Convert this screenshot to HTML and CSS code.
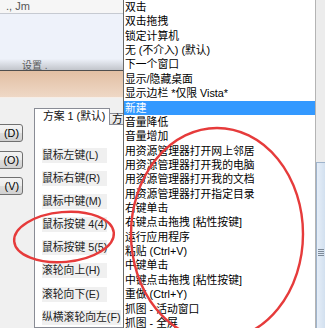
FILE: index.html
```html
<!DOCTYPE html>
<html lang="zh-CN">
<head>
    <meta charset="UTF-8">
    <title>鼠标按键设置</title>
    <link rel="stylesheet" href="styles.css">
</head>
<body>

    <div class="screen">
        <div class="left-pane">
            <div class="title-strip"><span>., Jm</span></div>
            <div class="preview">
                <span class="preview-caption">设置 .</span>
            </div>
            <div class="peach-bar"></div>

            <div class="lower">
                <div class="button-col">
                    <button class="btn">(D)</button>
                    <button class="btn">(O)</button>
                    <button class="btn">(V)</button>
                </div>

                <div class="tab-control">
                    <div class="tab-strip">
                        <div class="tab active">方案 1 (默认)</div>
                        <div class="tab">方</div>
                    </div>
                    <div class="tab-panel">
                        <span class="key-label">鼠标左键(L)</span>
                        <span class="key-label">鼠标右键(R)</span>
                        <span class="key-label">鼠标中键(M)</span>
                        <span class="key-label">鼠标按键 4(4)</span>
                        <span class="key-label">鼠标按键 5(5)</span>
                        <span class="key-label">滚轮向上(H)</span>
                        <span class="key-label">滚轮向下(E)</span>
                        <span class="key-label">纵横滚轮向左(F)</span>
                    </div>
                </div>
            </div>
        </div>

        <!-- dropdown list of actions -->
        <ul class="action-list">
            <li>双击</li>
            <li>双击拖拽</li>
            <li>锁定计算机</li>
            <li>无 (不介入) (默认)</li>
            <li>下一个窗口</li>
            <li>显示/隐藏桌面</li>
            <li>显示边栏 *仅限 Vista*</li>
            <li class="selected">新建</li>
            <li>音量降低</li>
            <li>音量增加</li>
            <li>用资源管理器打开网上邻居</li>
            <li>用资源管理器打开我的电脑</li>
            <li>用资源管理器打开我的文档</li>
            <li>用资源管理器打开指定目录</li>
            <li>右键单击</li>
            <li>右键点击拖拽 [粘性按键]</li>
            <li>运行应用程序</li>
            <li>粘贴 (Ctrl+V)</li>
            <li>中键单击</li>
            <li>中键点击拖拽 [粘性按键]</li>
            <li>重做 (Ctrl+Y)</li>
            <li>抓图 - 活动窗口</li>
            <li>抓图 - 全屏</li>
        </ul>

        <div class="side-strip">
            <div class="side-thumb"><span class="grip"></span></div>
        </div>
    </div>

    <!-- red hand-drawn marks -->
    <svg class="marks" width="325" height="328" viewBox="0 0 325 328">
        <ellipse cx="64" cy="237" rx="50" ry="25" transform="rotate(-5 64 237)" />
        <ellipse cx="217" cy="234" rx="86" ry="106" />
    </svg>

</body>
</html>
```

FILE: styles.css
```css
* {
    margin: 0;
    padding: 0;
    box-sizing: border-box;
}

body {
    position: relative;
    width: 325px;
    height: 328px;
    overflow: hidden;
    background-color: #f0f0f0;
    font-family: "Liberation Sans", "Noto Sans CJK SC", sans-serif;
    font-size: 10.8px;
    color: #111;
}

.screen {
    display: flex;
    height: 328px;
}

/* left side of the window */
.left-pane {
    width: 123px;
    flex-shrink: 0;
    display: flex;
    flex-direction: column;
    overflow: hidden;
}

.title-strip {
    height: 14px;
    padding-left: 6px;
    background-color: #f6f6f6;
    border-bottom: 1px solid #c6cad1;
    font-size: 11px;
    line-height: 12px;
    color: #555;
    overflow: hidden;
}

.preview {
    height: 57px;
    display: flex;
    align-items: flex-end;
    padding-left: 22px;
    background: linear-gradient(#eef2fa 0, #eef2fa 80%, #c2c5cb 100%);
    border-bottom: 1px solid #4e4e4e;
}

.preview-caption {
    font-size: 10px;
    line-height: 10px;
    margin-bottom: -1px;
    color: #5a5a5a;
}

.peach-bar {
    height: 27px;
    background: linear-gradient(#e2bfa3, #efd8c6);
    border-bottom: 1px solid #f6eee8;
}

.lower {
    flex: 1;
    display: flex;
}

.button-col {
    width: 23px;
    flex-shrink: 0;
    display: flex;
    flex-direction: column;
    gap: 8.5px;
    padding-top: 26px;
}

.btn {
    width: 40px;
    height: 18px;
    margin-left: -17px;
    padding-right: 3px;
    text-align: right;
    font-family: inherit;
    font-size: 10.8px;
    color: #000;
    border: 1px solid #707070;
    border-radius: 3px;
    background: linear-gradient(#f3f3f3 0, #ebebeb 50%, #dddddd 51%, #d0d0d0 100%);
}

/* tab control */
.tab-control {
    width: 130px;
    flex-shrink: 0;
    margin-left: 11px;
    margin-top: 10px;
    display: flex;
    flex-direction: column;
}

.tab-strip {
    height: 16px;
    display: flex;
    align-items: flex-end;
}

.tab {
    width: 20px;
    height: 11px;
    padding-left: 2px;
    line-height: 10px;
    white-space: nowrap;
    border: 1px solid #898c95;
    border-left: none;
    border-bottom: none;
    background: linear-gradient(#f2f2f2, #e3e3e3);
}

.tab.active {
    position: relative;
    z-index: 1;
    width: 76px;
    height: 17px;
    margin-bottom: -1px;
    padding-left: 8px;
    line-height: 15px;
    border-left: 1px solid #898c95;
    background: #fff;
}

.tab-panel {
    flex: 1;
    display: flex;
    flex-direction: column;
    align-items: flex-start;
    gap: 8.1px;
    padding: 23px 0 0 7px;
    border: 1px solid #898c95;
    background-color: #fff;
}

.key-label {
    min-width: 65px;
    height: 15px;
    line-height: 15px;
    white-space: nowrap;
    background-color: #f0f0f0;
    color: #222;
}

/* dropdown list */
.action-list {
    width: 193px;
    flex-shrink: 0;
    list-style: none;
    background-color: #fff;
    border-left: 1px solid #6a6a6a;
    border-right: 1px solid #b4b4b4;
}

.action-list li {
    height: 14.36px;
    line-height: 14.36px;
    padding-left: 1px;
    white-space: nowrap;
    overflow: hidden;
    color: #000;
}

.action-list li.selected {
    background-color: #3399ff;
    color: #fff;
}

.side-strip {
    flex: 1;
    padding-top: 162px;
    background-color: #ececec;
}

.side-thumb {
    height: 170px;
    display: flex;
    justify-content: center;
    padding-top: 86px;
    border-top: 1px solid #9fb4cc;
    border-left: 1px solid #9fb4cc;
    background: linear-gradient(90deg, #e6eef8, #d2e0ef);
}

.grip {
    width: 6px;
    height: 7px;
    background: repeating-linear-gradient(#7d8a99 0, #7d8a99 1px, transparent 1px, transparent 2px);
}

.marks {
    position: absolute;
    top: 0;
    left: 0;
    pointer-events: none;
}

.marks ellipse {
    fill: none;
    stroke: #e63b3b;
    stroke-width: 2.4;
}
```
